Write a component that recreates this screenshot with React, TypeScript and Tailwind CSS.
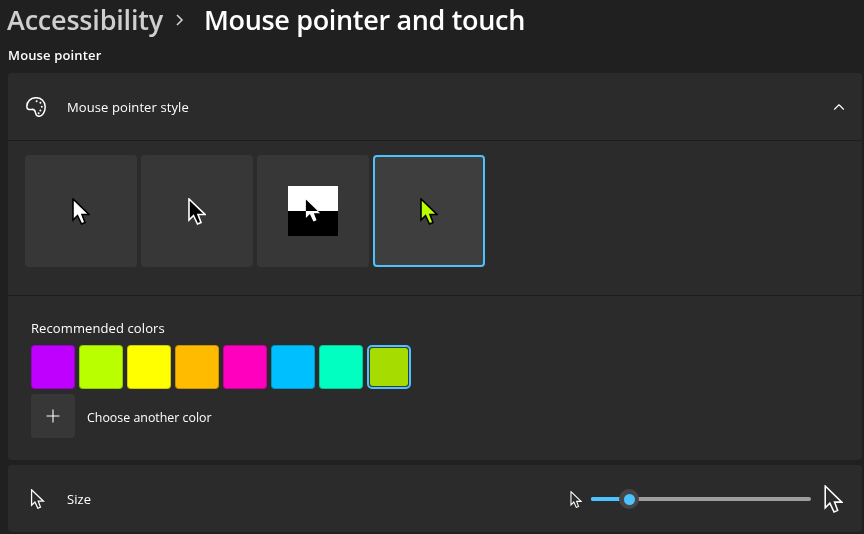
import { ChevronUp } from 'lucide-react'

const font = { fontFamily: '"Open Sans", "Noto Sans", sans-serif' }

const swatches = ['bg-[#c000ff]', 'bg-[#b9ff00]', 'bg-[#ffff00]', 'bg-[#ffbb00]', 'bg-[#ff00bf]', 'bg-[#00bfff]', 'bg-[#00ffc1]']

const arrow = 'M1 1 L1 22 L5.5 17.5 L9.5 26 L13 24.5 L10 16.5 L17 16.5 Z'

function Cursor({ w, h, fill, stroke, sw = 1.6 }: { w: number; h: number; fill: string; stroke: string; sw?: number }) {
  return (
    <svg width={w} height={h} viewBox="0 0 18 27" className="block">
      <path d={arrow} fill={fill} stroke={stroke} strokeWidth={sw} strokeLinejoin="miter" />
    </svg>
  )
}

function PaletteIcon() {
  return (
    <svg width="20" height="20" viewBox="0 0 20 20" fill="none" stroke="#fff" strokeWidth="1.5">
      <path d="M0.8 9.5 C0.8 4.3 5 0.7 10 0.7 C15.2 0.7 19.2 4.6 19.2 9.8 C19.2 15.4 16.2 19.3 13 19.3 C10.6 19.3 9.8 17.6 9.4 15.4 C9 13.2 7.8 12.2 5.8 12.4 C3 12.9 0.8 12.4 0.8 9.5 Z" />
      <g fill="#fff" stroke="none">
        <circle cx="10.6" cy="4.2" r="1" />
        <circle cx="14.4" cy="5.8" r="1" />
        <circle cx="15.8" cy="9.8" r="1" />
        <circle cx="14.4" cy="13.6" r="1" />
        <circle cx="12.6" cy="16.2" r="1" />
      </g>
    </svg>
  )
}

function Tile({ children, selected }: { children: React.ReactNode; selected?: boolean }) {
  return (
    <div className={selected
      ? 'flex h-[112px] w-[112px] items-center justify-center rounded-[4px] border-2 border-[#4cc2ff] bg-[#3e3e3e]'
      : 'flex h-[112px] w-[112px] items-center justify-center rounded-[4px] bg-[#373737]'}>
      {children}
    </div>
  )
}

export default function App() {
  return (
    <div className="h-[534px] w-[864px] overflow-hidden bg-[#202020] text-white" style={font}>
      <div className="flex h-[41px] items-center pb-px pl-[7px] text-[27px] font-semibold tracking-[-0.2px]">
        <span className="text-[#cfcfcf]">Accessibility</span>
        <svg width="10" height="14" viewBox="0 0 10 14" className="ml-[12px] mr-[19px]" fill="none" stroke="#cfcfcf" strokeWidth="1.6">
          <path d="M2 2 L7 7 L2 12" />
        </svg>
        <span className="tracking-[-0.33px]">Mouse pointer and touch</span>
      </div>

      <div className="mt-[5px] h-[27px] pl-2 text-[13px] font-semibold leading-[18px] tracking-[0.15px]">Mouse pointer</div>

      <div className="ml-2 mr-[2px] h-[387px] rounded-[4px] bg-[#2b2b2b]">
        <div className="flex h-[68px] items-center border-b border-[#1d1d1d] pl-[18px] pr-[14px]">
          <PaletteIcon />
          <span className="ml-[21px] pt-[2px] text-[13px] tracking-[0.1px]">Mouse pointer style</span>
          <ChevronUp className="ml-auto" size={18} strokeWidth={1.5} color="#fff" />
        </div>

        <div className="flex h-[155px] items-start gap-1 border-b border-[#1d1d1d] pl-[17px] pt-[14px]">
          <Tile><Cursor w={18} h={27} fill="#fff" stroke="#000" /></Tile>
          <Tile><Cursor w={18} h={27} fill="#000" stroke="#fff" /></Tile>
          <Tile>
            <div className="relative h-[50px] w-[50px]">
              <div className="h-[25px] bg-white" />
              <div className="h-[25px] bg-black" />
              <div className="absolute left-[17px] top-[12px] mix-blend-difference">
                <Cursor w={16} h={25} fill="#fff" stroke="#fff" sw={0} />
              </div>
            </div>
          </Tile>
          <Tile selected><Cursor w={18} h={27} fill="#b9ff00" stroke="#000" /></Tile>
        </div>

        <div className="pl-[23px] pt-[23px]">
          <div className="text-[13px] leading-[18px] tracking-[0.1px]">Recommended colors</div>
          <div className="mt-2 flex gap-1">
            {swatches.map((c) => (
              <div key={c} className={`h-[44px] w-[44px] rounded-[4px] border border-black/20 ${c}`} />
            ))}
            <div className="h-[44px] w-[44px] rounded-[5px] border-2 border-[#4cc2ff] bg-[#3a3a3a] p-px">
              <div className="h-full w-full rounded-[3px] bg-[#a6dc00]" />
            </div>
          </div>
          <div className="mt-[5px] flex items-center">
            <div className="flex h-[44px] w-[44px] items-center justify-center rounded-[4px] bg-[#373737]">
              <svg width="14" height="14" viewBox="0 0 14 14" stroke="#fff" strokeWidth="1.1">
                <path d="M7 0.5 V13.5 M0.5 7 H13.5" />
              </svg>
            </div>
            <span className="ml-3 pt-[5px] text-[12.4px]">Choose another color</span>
          </div>
        </div>
      </div>

      <div className="ml-2 mr-[2px] mt-[5px] flex h-[67px] items-center rounded-[4px] bg-[#2b2b2b] pl-[22px] pt-px">
        <Cursor w={15} h={20} fill="none" stroke="#fff" sw={1.7} />
        <span className="ml-[22px] pt-[2px] text-[13px] tracking-[0.1px]">Size</span>
        <div className="ml-auto flex items-center pr-[19px]">
          <Cursor w={12} h={17} fill="none" stroke="#fff" sw={1.7} />
          <div className="relative ml-[9px] h-[4px] w-[220px] rounded-full bg-[#9e9e9e]">
            <div className="h-full w-[38px] rounded-l-full bg-[#4cc2ff]" />
            <div className="absolute left-[28px] top-[-8px] flex h-[20px] w-[20px] items-center justify-center rounded-full bg-[#454545]">
              <div className="h-[11px] w-[11px] rounded-full bg-[#4cc2ff]" />
            </div>
          </div>
          <div className="ml-[13px]">
            <Cursor w={19} h={28} fill="none" stroke="#fff" sw={1.5} />
          </div>
        </div>
      </div>
    </div>
  )
}
